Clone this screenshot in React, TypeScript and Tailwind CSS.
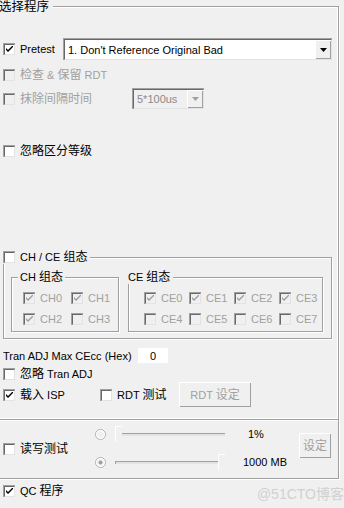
import { ReactNode } from "react";

const FONT = { fontFamily: '"Liberation Sans", Tahoma, "Noto Sans CJK SC", sans-serif' };

function Check({ checked, disabled }: { checked?: boolean; disabled?: boolean }) {
  return (
    <div className="w-[12px] h-[12px] shrink-0 border-t border-l border-[#a0a0a0] border-r-white border-b-white">
      <div
        className={`w-full h-full border-t border-l border-t-[#696969] border-l-[#696969] border-r border-b border-r-[#e3e3e3] border-b-[#e3e3e3] flex items-center justify-center ${
          disabled ? "bg-[#f0f0f0]" : "bg-white"
        }`}
      >
        {checked && (
          <svg width="7" height="7" viewBox="0 0 7 7">
            <path d="M0 2 L0 4 L2 6 L7 1 L7 -1 L2 4 Z" fill={disabled ? "#a0a0a0" : "#000"} />
          </svg>
        )}
      </div>
    </div>
  );
}

function Zh({ children }: { children: ReactNode }) {
  return <span className="text-[12px]">{children}</span>;
}

function Row({
  checked,
  disabled,
  children,
  className = "",
}: {
  checked?: boolean;
  disabled?: boolean;
  children: ReactNode;
  className?: string;
}) {
  return (
    <div className={`flex items-center h-[14px] ${className}`}>
      <Check checked={checked} disabled={disabled} />
      <span className={`ml-[5px] whitespace-nowrap ${disabled ? "text-[#a0a0a0]" : "text-black"}`}>{children}</span>
    </div>
  );
}

function Arrow({ disabled }: { disabled?: boolean }) {
  return (
    <div className="w-[16px] h-full border-t border-l border-white border-r-[#696969] border-b-[#696969] bg-[#f0f0f0]">
      <div className="w-full h-full border-r border-b border-r-[#a0a0a0] border-b-[#a0a0a0] flex items-center justify-center">
        <svg width="7" height="4" viewBox="0 0 7 4">
          <path d="M0 0 H7 L3.5 4 Z" fill={disabled ? "#a0a0a0" : "#000"} />
        </svg>
      </div>
    </div>
  );
}

function Select({ text, disabled, className }: { text: string; disabled?: boolean; className: string }) {
  return (
    <div className={`${className} border-t border-l border-[#a0a0a0] border-r-white border-b-white`}>
      <div
        className={`w-full h-full flex items-stretch border-t border-l border-t-[#696969] border-l-[#696969] border-r border-b border-r-[#e3e3e3] border-b-[#e3e3e3] ${
          disabled ? "bg-[#f0f0f0] text-[#8a8a8a]" : "bg-white text-black"
        }`}
      >
        <span className="flex-1 pl-[3px] flex items-center whitespace-nowrap overflow-hidden">{text}</span>
        <Arrow disabled={disabled} />
      </div>
    </div>
  );
}

function Button({ children, className }: { children: ReactNode; className: string }) {
  return (
    <div className={`${className} border-t border-l border-white border-r-[#696969] border-b-[#696969] bg-[#f0f0f0]`}>
      <div className="w-full h-full border-r border-b border-r-[#a0a0a0] border-b-[#a0a0a0] flex items-center justify-center text-[#a0a0a0] whitespace-nowrap">
        <span>{children}</span>
      </div>
    </div>
  );
}

function Radio({ dot }: { dot?: boolean }) {
  return (
    <svg width="11" height="11" viewBox="0 0 11 11" className="shrink-0">
      <circle cx="5.5" cy="5.5" r="5" fill="#f0f0f0" stroke="#b0b0b0" />
      <circle cx="5.5" cy="5.5" r="4" fill="none" stroke="#fff" />
      {dot && <circle cx="5.5" cy="5.5" r="2" fill="#a0a0a0" />}
    </svg>
  );
}

function Slider({ pos }: { pos: "start" | "end" }) {
  return (
    <div className="w-[110px] h-[16px] flex items-center relative">
      <div className="w-full h-[3px] border-t border-l border-[#a0a0a0] border-r-white border-b-white bg-[#e3e3e3]" />
      <div
        className={`absolute top-0 ${pos === "start" ? "left-0" : "right-0"} w-[7px] h-[16px] border-t border-l border-white border-r-[#696969] border-b-[#696969] bg-[#f0f0f0]`}
      />
    </div>
  );
}

export default function App() {
  const chk = "border border-[#a0a0a0] shadow-[1px_1px_0_#fff,inset_1px_1px_0_#fff]";
  return (
    <div className="w-[344px] h-[508px] bg-[#f0f0f0] overflow-hidden relative text-[11px] leading-[14px] text-black" style={FONT}>
      {/* 选择程序 */}
      <div className="ml-[-2px] mt-[6px] w-[341px] h-[414px] pl-[5px] border-t border-r border-b border-[#a0a0a0] shadow-[1px_1px_0_#fff,inset_0_1px_0_#fff,inset_-1px_-1px_0_#fff]">
        <div className="-mt-[7px] -ml-[4px] w-fit pr-[4px] bg-[#f0f0f0] text-[12.5px] leading-[14px]">选择程序</div>

        <div className="mt-[24px] h-[22px] flex items-center">
          <div className="w-[60px] flex items-center">
            <Check checked />
            <span className="ml-[5px]">Pretest</span>
          </div>
          <Select text="1. Don't Reference Original Bad" className="w-[269px] h-[22px]" />
        </div>

        <Row disabled className="mt-[8px]">
          <Zh>检查</Zh> &amp; <Zh>保留</Zh> RDT
        </Row>

        <div className="mt-[6px] h-[21px] flex items-center">
          <div className="w-[129px]">
            <Row disabled>
              <Zh>抹除间隔时间</Zh>
            </Row>
          </div>
          <Select text="5*100us" disabled className="w-[72px] h-[21px]" />
        </div>

        <Row className="mt-[35px]">
          <Zh>忽略区分等级</Zh>
        </Row>

        {/* CH / CE 组态 */}
        <div className={`mt-[99px] w-[329px] h-[82px] ${chk}`}>
          <div className="-mt-[8px] -ml-px w-fit pr-[3px] bg-[#f0f0f0]">
            <Row>
              CH / CE <Zh>组态</Zh>
            </Row>
          </div>
          <div className="mt-[13px] pl-[7px] flex gap-[9px]">
            <div className={`w-[108px] h-[55px] ${chk}`}>
              <div className="-mt-[8px] ml-[6px] w-fit px-[2px] bg-[#f0f0f0] h-[14px]">
                CH <Zh>组态</Zh>
              </div>
              <div className="pl-[11px]">
                <div className="mt-[7px] flex">
                  <div className="w-[48px]"><Row checked disabled>CH0</Row></div>
                  <Row checked disabled>CH1</Row>
                </div>
                <div className="mt-[7px] flex">
                  <div className="w-[48px]"><Row checked disabled>CH2</Row></div>
                  <Row disabled>CH3</Row>
                </div>
              </div>
            </div>
            <div className={`w-[195px] h-[55px] ${chk}`}>
              <div className="-mt-[8px] ml-[-1px] w-fit pr-[3px] bg-[#f0f0f0] h-[14px]">
                CE <Zh>组态</Zh>
              </div>
              <div className="pl-[15px]">
                <div className="mt-[7px] flex">
                  <div className="w-[45px]"><Row checked disabled>CE0</Row></div>
                  <div className="w-[45px]"><Row checked disabled>CE1</Row></div>
                  <div className="w-[45px]"><Row checked disabled>CE2</Row></div>
                  <Row checked disabled>CE3</Row>
                </div>
                <div className="mt-[7px] flex">
                  <div className="w-[45px]"><Row disabled>CE4</Row></div>
                  <div className="w-[45px]"><Row disabled>CE5</Row></div>
                  <div className="w-[45px]"><Row disabled>CE6</Row></div>
                  <Row disabled>CE7</Row>
                </div>
              </div>
            </div>
          </div>
        </div>

        <div className="mt-[9px] h-[15px] flex items-center">
          <span className="w-[135px] whitespace-nowrap">Tran ADJ Max CEcc (Hex)</span>
          <div className="w-[30px] h-[15px] bg-white flex items-center justify-center">0</div>
        </div>

        <Row className="mt-[4px]">
          <Zh>忽略</Zh> Tran ADJ
        </Row>

        <div className="mt-[1px] h-[25px] flex items-center">
          <div className="w-[97px]">
            <Row checked>
              <Zh>载入</Zh> ISP
            </Row>
          </div>
          <div className="w-[79px]">
            <Row>
              RDT <Zh>测试</Zh>
            </Row>
          </div>
          <Button className="w-[72px] h-[25px]">
            RDT <Zh>设定</Zh>
          </Button>
        </div>
      </div>

      {/* 读写测试 */}
      <div className="ml-[-2px] w-[341px] h-[59px] pl-[5px] flex border-r border-b border-[#a0a0a0] shadow-[1px_1px_0_#fff]">
        <div className="w-[92px] flex items-center">
          <Row>
            <Zh>读写测试</Zh>
          </Row>
        </div>
        <div className="pt-[6px] flex flex-col gap-[12px]">
          <div className="h-[16px] flex items-center">
            <Radio />
            <div className="ml-[9px]">
              <Slider pos="start" />
            </div>
            <span className="ml-[23px] w-[51px]">1%</span>
          </div>
          <div className="h-[16px] flex items-center">
            <Radio dot />
            <div className="ml-[9px]">
              <Slider pos="end" />
            </div>
            <span className="ml-[18px] w-[56px] whitespace-nowrap">1000 MB</span>
          </div>
        </div>
        <Button className="mt-[13px] w-[32px] h-[25px] text-[12px]">
          <Zh>设定</Zh>
        </Button>
      </div>

      <Row checked className="mt-[5px] ml-[3px]">
        QC <Zh>程序</Zh>
      </Row>

      <div className="absolute right-[0px] bottom-[6px] text-[14px] leading-[16px] text-[#d0d0d0] whitespace-nowrap">
        @51CTO博客
      </div>
    </div>
  );
}
